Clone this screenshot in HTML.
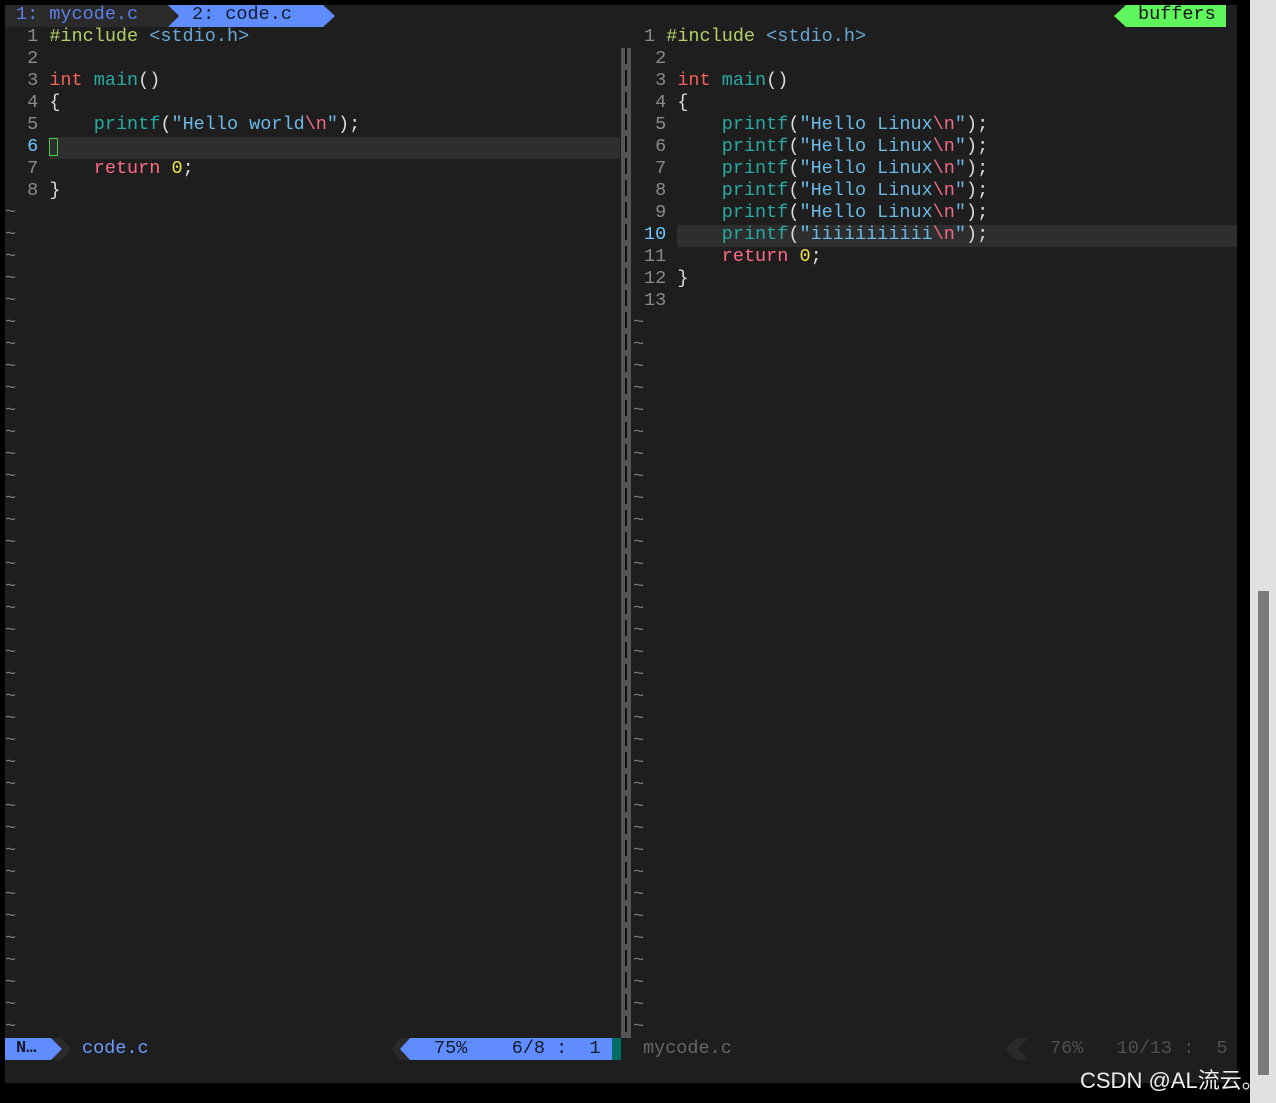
<!DOCTYPE html>
<html><head><meta charset="utf-8"><style>
body{margin:0;width:1276px;height:1103px;background:#000;position:relative;overflow:hidden;font-family:"Liberation Mono",monospace;font-size:18.5px;}
.ed{position:absolute;left:5px;top:5px;width:1232px;height:1078px;background:#1e1e1e;}
.a{position:absolute;white-space:pre;line-height:22px;}
.ln{color:#8a8a8a}.cl{color:#6ec6ff}
.g{color:#b3cf6a}.h{color:#6aa8d4}.k{color:#f2605a}.f{color:#26aaa2}.s{color:#6cb8e4}.e{color:#ee6a86}.r{color:#ff6a86}.n{color:#eee34a}.p{color:#dcdcdc}
.t{color:#7a7a7a}
</style></head><body>
<div class="ed"></div>
<!-- tab bar -->
<div style="position:absolute;left:5px;top:5px;width:170px;height:22px;background:#2a2a2a"></div>
<svg style="position:absolute;left:168px;top:5px" width="170" height="22"><polygon points="0,0 155,0 167,11 155,22 0,22 11,11" fill="#5f8cff"/></svg>
<div class="a" style="left:16px;top:4px;color:#5f7fe8">1: mycode.c</div>
<div class="a" style="left:192px;top:4px;color:#141a2a">2: code.c</div>
<svg style="position:absolute;left:1114px;top:5px" width="113" height="22"><polygon points="12,0 112,0 112,22 12,22 0,11" fill="#5ff55c"/></svg>
<div class="a" style="left:1138px;top:4px;color:#111">buffers</div>
<!-- cursorlines -->
<div style="position:absolute;left:49px;top:137px;width:571px;height:22px;background:#2e2e2e"></div>
<div style="position:absolute;left:677px;top:225px;width:560px;height:22px;background:#2e2e2e"></div>
<div style="position:absolute;left:49px;top:138px;width:9px;height:18px;border:1px solid #3ed03e;box-sizing:border-box"></div>
<!-- left code -->
<div class="a" style="left:16px;top:26px"><span class="ln"> 1 </span><span class="g">#include</span> <span class="h">&lt;stdio.h&gt;</span>
<span class="ln"> 2 </span>
<span class="ln"> 3 </span><span class="k">int</span> <span class="f">main</span><span class="p">()</span>
<span class="ln"> 4 </span><span class="p">{</span>
<span class="ln"> 5 </span>    <span class="f">printf</span><span class="p">(</span><span class="s">"Hello world</span><span class="e">\n</span><span class="s">"</span><span class="p">);</span>
<span class="cl"> 6 </span>
<span class="ln"> 7 </span>    <span class="r">return</span> <span class="n">0</span><span class="p">;</span>
<span class="ln"> 8 </span><span class="p">}</span></div>
<div class="a t" style="left:5px;top:202px">~
~
~
~
~
~
~
~
~
~
~
~
~
~
~
~
~
~
~
~
~
~
~
~
~
~
~
~
~
~
~
~
~
~
~
~
~
~</div>
<!-- separator -->
<div style="position:absolute;left:621px;top:48px;width:10px;height:990px;background:#555"></div>
<div style="position:absolute;left:625px;top:48px;width:2px;height:990px;background:repeating-linear-gradient(#111 0 16px,#555 16px 22px)"></div>
<!-- right code -->
<div class="a" style="left:644px;top:26px"><span class="ln">1 </span><span class="g">#include</span> <span class="h">&lt;stdio.h&gt;</span>
<span class="ln"> 2 </span>
<span class="ln"> 3 </span><span class="k">int</span> <span class="f">main</span><span class="p">()</span>
<span class="ln"> 4 </span><span class="p">{</span>
<span class="ln"> 5 </span>    <span class="f">printf</span><span class="p">(</span><span class="s">"Hello Linux</span><span class="e">\n</span><span class="s">"</span><span class="p">);</span>
<span class="ln"> 6 </span>    <span class="f">printf</span><span class="p">(</span><span class="s">"Hello Linux</span><span class="e">\n</span><span class="s">"</span><span class="p">);</span>
<span class="ln"> 7 </span>    <span class="f">printf</span><span class="p">(</span><span class="s">"Hello Linux</span><span class="e">\n</span><span class="s">"</span><span class="p">);</span>
<span class="ln"> 8 </span>    <span class="f">printf</span><span class="p">(</span><span class="s">"Hello Linux</span><span class="e">\n</span><span class="s">"</span><span class="p">);</span>
<span class="ln"> 9 </span>    <span class="f">printf</span><span class="p">(</span><span class="s">"Hello Linux</span><span class="e">\n</span><span class="s">"</span><span class="p">);</span>
<span class="cl">10 </span>    <span class="f">printf</span><span class="p">(</span><span class="s">"iiiiiiiiiii</span><span class="e">\n</span><span class="s">"</span><span class="p">);</span>
<span class="ln">11 </span>    <span class="r">return</span> <span class="n">0</span><span class="p">;</span>
<span class="ln">12 </span><span class="p">}</span>
<span class="ln">13 </span></div>
<div class="a t" style="left:633px;top:312px">~
~
~
~
~
~
~
~
~
~
~
~
~
~
~
~
~
~
~
~
~
~
~
~
~
~
~
~
~
~
~
~
~</div>
<!-- status bar -->
<svg style="position:absolute;left:5px;top:1038px" width="65" height="22"><polygon points="48,0 56,0 67,11 56,22 48,22" fill="#2a2a2a"/><polygon points="0,0 46,0 57,11 46,22 0,22" fill="#5f8cff"/></svg>
<div class="a" style="left:16px;top:1038px;color:#141a2a;font-weight:bold;font-size:17px">N…</div>
<div class="a" style="left:82px;top:1038px;color:#6d9bff">code.c</div>
<svg style="position:absolute;left:388px;top:1038px" width="235" height="22"><polygon points="12,0 4,11 12,22 22,22 14,11 22,0" fill="#2a2a2a"/><polygon points="22,0 224,0 224,22 22,22 12,11" fill="#5f8cff"/><rect x="224" y="0" width="9" height="22" fill="#006e62"/></svg>
<div class="a" style="left:434px;top:1038px;color:#141a2a">75%    6/8 :  1</div>
<div class="a" style="left:643px;top:1038px;color:#666">mycode.c</div>
<svg style="position:absolute;left:1000px;top:1038px" width="30" height="22"><polygon points="16,0 6,11 16,22 28,22 18,11 28,0" fill="#2a2a2a"/></svg>
<div class="a" style="left:1050px;top:1038px;color:#505050">76%   10/13 :  5</div>
<!-- scrollbar -->
<div style="position:absolute;left:1250px;top:0;width:26px;height:1103px;background:#e2e2e2"></div>
<div style="position:absolute;left:1258px;top:591px;width:11px;height:484px;background:#7b7b7b"></div>
<div style="position:absolute;left:1080px;top:1066px;color:#eee;font-family:'Liberation Sans','Noto Sans CJK SC',sans-serif;font-size:22px;line-height:30px;white-space:nowrap">CSDN @AL流云。</div>
</body></html>
